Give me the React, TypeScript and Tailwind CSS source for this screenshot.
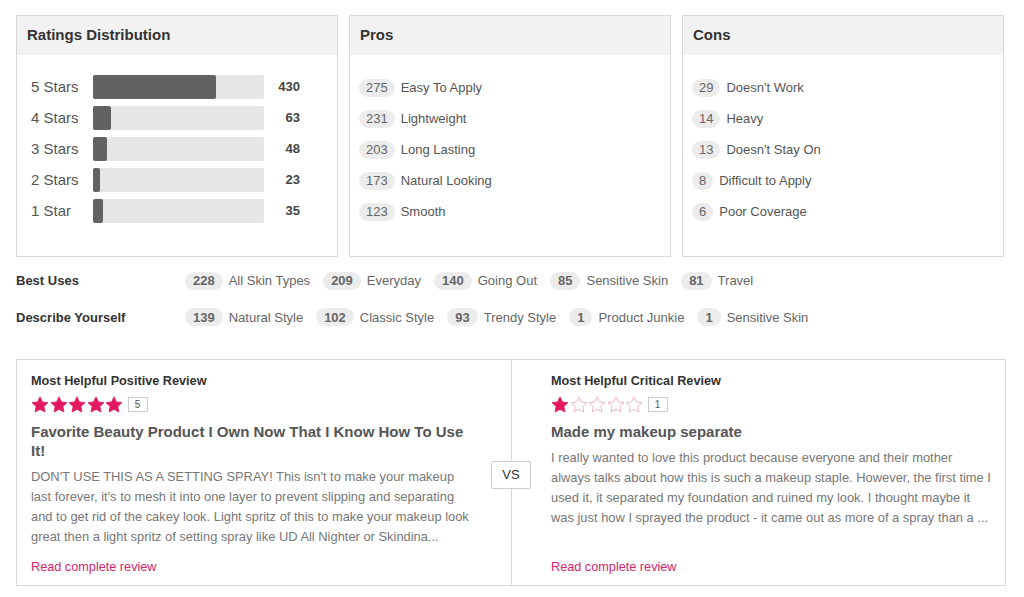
import React from 'react';

const ratings = [
  { label: '5 Stars', count: 430, pct: 72 },
  { label: '4 Stars', count: 63, pct: 10.5 },
  { label: '3 Stars', count: 48, pct: 8 },
  { label: '2 Stars', count: 23, pct: 4 },
  { label: '1 Star', count: 35, pct: 6 },
];

const pros = [
  { n: 275, t: 'Easy To Apply' },
  { n: 231, t: 'Lightweight' },
  { n: 203, t: 'Long Lasting' },
  { n: 173, t: 'Natural Looking' },
  { n: 123, t: 'Smooth' },
];

const cons = [
  { n: 29, t: "Doesn't Work" },
  { n: 14, t: 'Heavy' },
  { n: 13, t: "Doesn't Stay On" },
  { n: 8, t: 'Difficult to Apply' },
  { n: 6, t: 'Poor Coverage' },
];

const bestUses = [
  { n: 228, t: 'All Skin Types' },
  { n: 209, t: 'Everyday' },
  { n: 140, t: 'Going Out' },
  { n: 85, t: 'Sensitive Skin' },
  { n: 81, t: 'Travel' },
];

const describe = [
  { n: 139, t: 'Natural Style' },
  { n: 102, t: 'Classic Style' },
  { n: 93, t: 'Trendy Style' },
  { n: 1, t: 'Product Junkie' },
  { n: 1, t: 'Sensitive Skin' },
];

function Card({ title, children }: { title: string; children: React.ReactNode }) {
  return (
    <div className="h-[242px] border border-[#d9d9d9] bg-white">
      <div className="flex h-[39px] items-center bg-[#f2f2f2] px-[10px] text-[15px] font-bold text-[#333]">
        {title}
      </div>
      {children}
    </div>
  );
}

function TagList({ items }: { items: { n: number; t: string }[] }) {
  return (
    <div className="flex flex-col gap-[13px] pt-[24px] pl-[9px]">
      {items.map((it) => (
        <div key={it.t} className="flex h-[18px] items-center">
          <span className="flex h-[18px] items-center rounded-full bg-[#ececec] px-[7px] text-[13px] text-[#666]">
            {it.n}
          </span>
          <span className="ml-[6px] text-[13px] text-[#555]">{it.t}</span>
        </div>
      ))}
    </div>
  );
}

function InlineTags({ items }: { items: { n: number; t: string }[] }) {
  return (
    <div className="flex items-center gap-[13px]">
      {items.map((it, i) => (
        <div key={i} className="flex items-center">
          <span className="flex h-[18px] items-center rounded-full bg-[#ececec] px-[8px] text-[13px] font-bold text-[#666]">
            {it.n}
          </span>
          <span className="ml-[6px] text-[13px] text-[#666]">{it.t}</span>
        </div>
      ))}
    </div>
  );
}

function Star({ filled }: { filled: boolean }) {
  return (
    <svg width="18" height="17" viewBox="0 0 24 23" className="mr-[0.5px]">
      <path
        d="M12 1.2l3.2 6.9 7.5.9-5.5 5.2 1.4 7.4L12 17.9l-6.6 3.7 1.4-7.4L1.3 9l7.5-.9z"
        fill={filled ? '#e2195e' : 'white'}
        stroke={filled ? '#e2195e' : '#f0a9c2'}
        strokeWidth="1.2"
        strokeLinejoin="round"
      />
    </svg>
  );
}

function Review({
  heading,
  rating,
  title,
  body,
  side,
}: {
  heading: string;
  rating: number;
  title: string;
  body: string;
  side: 'left' | 'right';
}) {
  return (
    <div
      className={`flex flex-col pt-[12px] pb-[8px] ${
        side === 'left' ? 'w-[494px] pr-[34px] pl-[14px]' : 'w-[493px] pr-[12px] pl-[39px]'
      }`}
    >
      <div className="text-[12.7px] font-bold text-[#333]">{heading}</div>
      <div className="mt-[5px] flex items-center">
        {[1, 2, 3, 4, 5].map((i) => (
          <Star key={i} filled={i <= rating} />
        ))}
        <span className="ml-[4px] flex h-[15px] w-[20px] items-center justify-center border border-[#ccc] text-[10px] text-[#555]">
          {rating}
        </span>
      </div>
      <div className="mt-[9px] text-[15px] leading-[19px] font-bold text-[#555]">{title}</div>
      <p className="mt-[7px] text-[12.9px] leading-[20px] text-[#777]">{body}</p>
      <a className="mt-auto text-[12.7px] text-[#d6246e]">Read complete review</a>
    </div>
  );
}

export default function App() {
  return (
    <div
      className="min-h-[597px] bg-white pt-[15px] pl-[16px]"
      style={{ fontFamily: '"Liberation Sans", Arial, sans-serif' }}
    >
      <div className="grid w-[988px] grid-cols-3 gap-[11px]">
        <Card title="Ratings Distribution">
          <div className="flex flex-col gap-[7px] pt-[20px] pr-[37px] pl-[14px]">
            {ratings.map((r) => (
              <div key={r.label} className="flex h-[24px] items-center">
                <span className="w-[62px] text-[15px] text-[#555]">{r.label}</span>
                <div className="h-[24px] w-[171px] rounded-[2px] bg-[#e6e6e6]">
                  <div
                    className="h-full rounded-[2px] bg-[#626262]"
                    style={{ width: `${r.pct}%` }}
                  />
                </div>
                <span className="flex-1 text-right text-[13px] font-bold text-[#444]">{r.count}</span>
              </div>
            ))}
          </div>
        </Card>
        <Card title="Pros">
          <TagList items={pros} />
        </Card>
        <Card title="Cons">
          <TagList items={cons} />
        </Card>
      </div>

      <div className="mt-[14px] flex items-center">
        <span className="w-[169px] text-[13px] font-bold text-[#333]">Best Uses</span>
        <InlineTags items={bestUses} />
      </div>
      <div className="mt-[17px] flex items-center">
        <span className="w-[169px] text-[13px] font-bold text-[#333]">Describe Yourself</span>
        <InlineTags items={describe} />
      </div>

      <div className="relative mt-[32px] flex h-[227px] w-[990px] border border-[#d9d9d9]">
        <Review
          side="left"
          heading="Most Helpful Positive Review"
          rating={5}
          title="Favorite Beauty Product I Own Now That I Know How To Use It!"
          body="DON'T USE THIS AS A SETTING SPRAY! This isn't to make your makeup last forever, it's to mesh it into one layer to prevent slipping and separating and to get rid of the cakey look. Light spritz of this to make your makeup look great then a light spritz of setting spray like UD All Nighter or Skindina..."
        />
        <div className="w-px bg-[#d9d9d9]" />
        <Review
          side="right"
          heading="Most Helpful Critical Review"
          rating={1}
          title="Made my makeup separate"
          body="I really wanted to love this product because everyone and their mother always talks about how this is such a makeup staple. However, the first time I used it, it separated my foundation and ruined my look. I thought maybe it was just how I sprayed the product - it came out as more of a spray than a ..."
        />
        <div className="absolute top-[101px] left-[474px] flex h-[28px] w-[40px] items-center justify-center rounded-[2px] border border-[#ccc] bg-white text-[13px] text-[#333]">
          VS
        </div>
      </div>
    </div>
  );
}
